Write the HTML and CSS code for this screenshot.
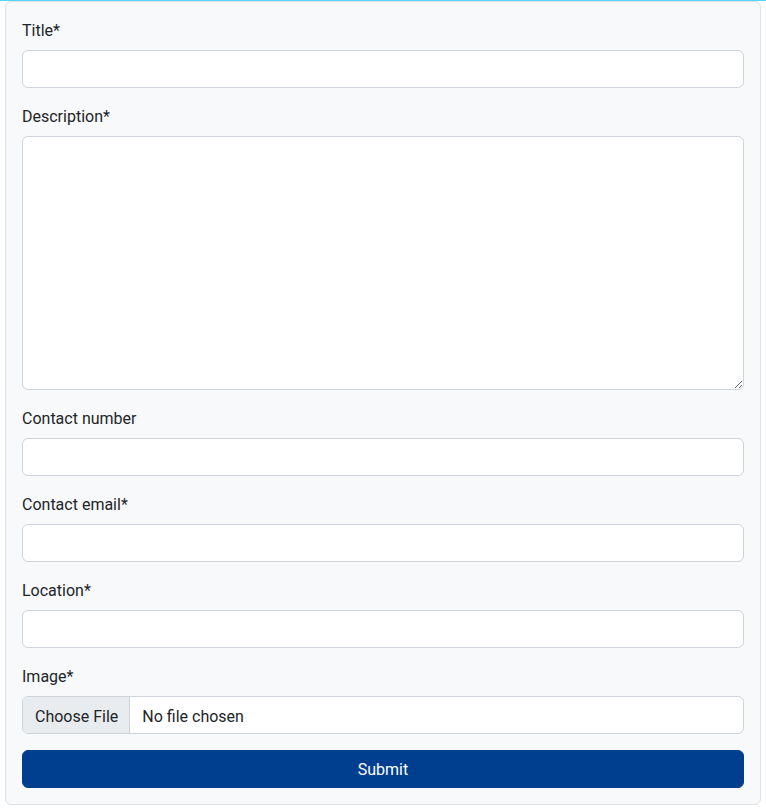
FILE: index.html
```html
<!DOCTYPE html>
<html lang="en">
<head>
<meta charset="utf-8">
<title>Create listing</title>
<link rel="stylesheet" href="styles.css">
</head>
<body>
<div class="topline"></div>
<div class="page">
  <form class="card">
    <div class="group">
      <label class="form-label" for="title">Title*</label>
      <input class="form-control" id="title" type="text">
    </div>
    <div class="group">
      <label class="form-label" for="desc">Description*</label>
      <textarea class="form-control textarea" id="desc" rows="10"></textarea>
    </div>
    <div class="group">
      <label class="form-label" for="phone">Contact number</label>
      <input class="form-control" id="phone" type="text">
    </div>
    <div class="group">
      <label class="form-label" for="email">Contact email*</label>
      <input class="form-control" id="email" type="email">
    </div>
    <div class="group">
      <label class="form-label" for="loc">Location*</label>
      <input class="form-control" id="loc" type="text">
    </div>
    <div class="group">
      <label class="form-label" for="img">Image*</label>
      <input class="form-control file" id="img" type="file">
    </div>
    <button class="btn-submit" type="button">Submit</button>
  </form>
</div>
</body>
</html>
```
FILE: styles.css
```css
* { box-sizing: border-box; }
html, body { margin: 0; padding: 0; }
body {
  font-family: "Segoe UI", Roboto, "Noto Sans", "Liberation Sans", sans-serif;
  font-size: 16px;
  line-height: 1.5;
  color: #212529;
  background: #ffffff;
}
.topline {
  height: 1px;
  background: #5ad3fb;
}
.page {
  padding: 0 5px;
}
.card {
  display: flex;
  flex-direction: column;
  background: #f8f9fa;
  border: 1px solid #dee2e6;
  border-radius: 6px;
  padding: 16px;
}
.group {
  display: flex;
  flex-direction: column;
  margin-bottom: 16px;
}
.form-label {
  display: block;
  padding-top: 1px;
  margin-bottom: 7px;
  font-size: 16px;
  line-height: 24px;
  color: #212529;
}
.form-control {
  display: block;
  width: 100%;
  height: 38px;
  padding: 7px 12px 5px;
  font-family: inherit;
  font-size: 16px;
  line-height: 24px;
  color: #212529;
  background: #fff;
  border: 1px solid #ced4da;
  border-radius: 6px;
  margin: 0;
  overflow: hidden;
}
.textarea {
  height: 254px;
  resize: vertical;
  overflow: auto;
}
.file {
  padding: 6px 12px;
}
.file::file-selector-button {
  padding: 7px 11px 5px 12px;
  margin: -6px 12px -6px -12px;
  height: 38px;
  font-family: inherit;
  font-size: 16px;
  line-height: 24px;
  color: #212529;
  background: #e9ecef;
  border: 0;
  border-right: 1px solid #ced4da;
  border-radius: 0;
}
.btn-submit {
  display: block;
  width: 100%;
  height: 38px;
  padding: 7px 12px 5px;
  font-family: inherit;
  font-size: 16px;
  line-height: 24px;
  color: #fff;
  background: #003f8f;
  border: 1px solid #003f8f;
  border-radius: 6px;
}
```
